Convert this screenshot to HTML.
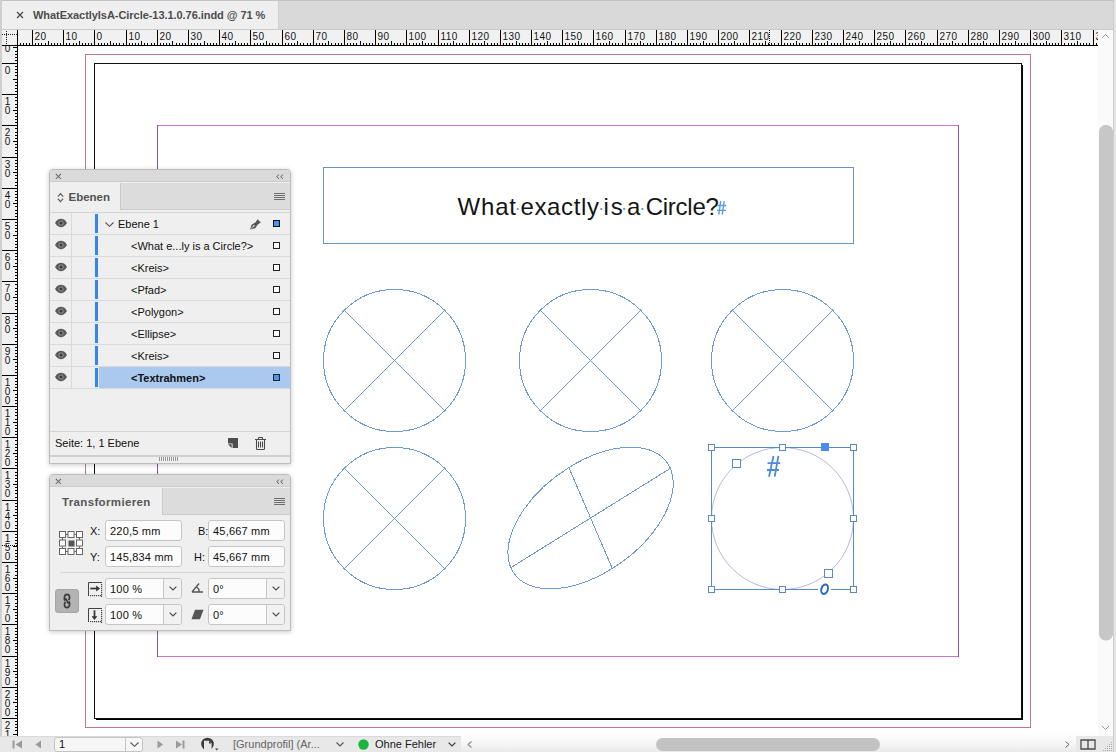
<!DOCTYPE html>
<html><head><meta charset="utf-8"><title>InDesign</title>
<style>
*{margin:0;padding:0;box-sizing:border-box}
html,body{width:1116px;height:752px;overflow:hidden;background:#fff;font-family:"Liberation Sans",sans-serif;color:#111}
.a{position:absolute}
</style></head><body>
<svg class="a" style="left:0;top:0" width="1116" height="752" viewBox="0 0 1116 752"><rect x="85.5" y="54.5" width="945" height="673" fill="none" stroke="#bd7a82" stroke-width="1"/><rect x="94.5" y="63.5" width="927" height="655" fill="#fff" stroke="#111" stroke-width="1"/><path d="M1022.5 65V720M96 719.5H1023" stroke="#000" stroke-width="1" fill="none"/><path d="M157 125.5H959M157 656.5H959" stroke="#c878c8" stroke-width="1" fill="none"/><path d="M157.5 125V657M958.5 125V657" stroke="#7d56ad" stroke-width="1" fill="none"/><rect x="323.5" y="167.5" width="530" height="76" fill="none" stroke="#6a93c2" stroke-width="1"/><circle cx="394.5" cy="360.5" r="71.0" fill="none" stroke="#6e9ad0" stroke-width="1" shape-rendering="crispEdges"/><path d="M344.3 310.3L444.7 410.7M444.7 310.3L344.3 410.7" stroke="#6e9ad0" stroke-width="1" fill="none" shape-rendering="crispEdges"/><circle cx="590.5" cy="360.5" r="71.0" fill="none" stroke="#6e9ad0" stroke-width="1" shape-rendering="crispEdges"/><path d="M540.3 310.3L640.7 410.7M640.7 310.3L540.3 410.7" stroke="#6e9ad0" stroke-width="1" fill="none" shape-rendering="crispEdges"/><circle cx="782.5" cy="360.5" r="71.0" fill="none" stroke="#6e9ad0" stroke-width="1" shape-rendering="crispEdges"/><path d="M732.3 310.3L832.7 410.7M832.7 310.3L732.3 410.7" stroke="#6e9ad0" stroke-width="1" fill="none" shape-rendering="crispEdges"/><circle cx="394.5" cy="518.5" r="71.0" fill="none" stroke="#6e9ad0" stroke-width="1" shape-rendering="crispEdges"/><path d="M344.3 468.3L444.7 568.7M444.7 468.3L344.3 568.7" stroke="#6e9ad0" stroke-width="1" fill="none" shape-rendering="crispEdges"/><circle cx="0" cy="0" r="1" fill="none" stroke="#6e9ad0" stroke-width="1" vector-effect="non-scaling-stroke" shape-rendering="crispEdges" transform="matrix(79.80 -49.70 21.70 50.45 590.60 518.00)"/><path d="M510.8 567.7L670.4 468.3M568.9 467.6L612.3 568.5" stroke="#6e9ad0" stroke-width="1" fill="none" shape-rendering="crispEdges"/><circle cx="782.5" cy="518.5" r="71" fill="none" stroke="#a2a8d2" stroke-width="0.8"/><rect x="711.5" y="447.5" width="142" height="142" fill="none" stroke="#5a88c8" stroke-width="1"/><rect x="708.5" y="444.5" width="6" height="6" fill="#fff" stroke="#5a88c8" stroke-width="1"/><rect x="708.5" y="515.5" width="6" height="6" fill="#fff" stroke="#5a88c8" stroke-width="1"/><rect x="708.5" y="586.5" width="6" height="6" fill="#fff" stroke="#5a88c8" stroke-width="1"/><rect x="779.5" y="444.5" width="6" height="6" fill="#fff" stroke="#5a88c8" stroke-width="1"/><rect x="779.5" y="586.5" width="6" height="6" fill="#fff" stroke="#5a88c8" stroke-width="1"/><rect x="850.5" y="444.5" width="6" height="6" fill="#fff" stroke="#5a88c8" stroke-width="1"/><rect x="850.5" y="515.5" width="6" height="6" fill="#fff" stroke="#5a88c8" stroke-width="1"/><rect x="850.5" y="586.5" width="6" height="6" fill="#fff" stroke="#5a88c8" stroke-width="1"/><rect x="732.5" y="459.5" width="8" height="8" fill="#fff" stroke="#5a88c8" stroke-width="1"/><rect x="824.5" y="569.5" width="8" height="8" fill="#fff" stroke="#5a88c8" stroke-width="1"/><rect x="821" y="443" width="8" height="8" fill="#4b8cf0"/><g font-family='"Liberation Sans", sans-serif' font-size="24" fill="#151515"><text x="457.5" y="214.5" style="letter-spacing:0.83px">What</text><text x="520.5" y="214.5" style="letter-spacing:0.63px">exactly</text><text x="603.6" y="214.5" style="letter-spacing:1.80px">is</text><text x="627.0" y="214.5" style="letter-spacing:0.00px">a</text><text x="645.7" y="214.5" style="letter-spacing:-0.25px">Circle?</text></g><rect x="516.8" y="208" width="2" height="2" fill="#6d9be0"/><rect x="600.3" y="208" width="2" height="2" fill="#6d9be0"/><rect x="623.2" y="208" width="2" height="2" fill="#6d9be0"/><rect x="641.4" y="208" width="2" height="2" fill="#6d9be0"/><path d="M720.7 201.1L718.8 214.7M724.3 201.1L722.2 214.7M717.5 205.5H726M717 210.4H726" stroke="#5b9ae8" stroke-width="1.4" fill="none"/><path d="M773.5 456L769 476.7M778.4 456L774.7 476.7M767.5 463.2H780.2M767 470H779" stroke="#4b8ae0" stroke-width="1.8" fill="none"/><rect x="818" y="584" width="13" height="11" fill="#fff"/><ellipse cx="824.6" cy="589.2" rx="3.2" ry="4.9" transform="rotate(18 824.6 589.2)" fill="none" stroke="#2a66c8" stroke-width="2"/><rect x="0" y="0" width="1116" height="30" fill="#d9d9d9"/><rect x="2" y="0" width="276" height="30" fill="#efefef"/><rect x="0" y="0" width="1116" height="1" fill="#c2c2c2"/><rect x="0" y="29" width="1116" height="1" fill="#c9c9c9"/><rect x="278" y="0" width="1" height="30" fill="#cfcfcf"/><rect x="2" y="30" width="1096" height="15" fill="#f1f1f1"/><rect x="2" y="45" width="15" height="691" fill="#f1f1f1"/><rect x="2" y="45" width="1096" height="1" fill="#000"/><rect x="17" y="30" width="1" height="706" fill="#000"/><path d="M20.5 43V45M23.5 43V45M26.5 43V45M29.5 43V45M32.5 30V45M35.5 43V45M38.5 43V45M41.5 43V45M45.5 43V45M48.5 41V45M51.5 43V45M54.5 43V45M57.5 43V45M60.5 43V45M63.5 30V45M66.5 43V45M69.5 43V45M73.5 43V45M76.5 43V45M79.5 41V45M82.5 43V45M85.5 43V45M88.5 43V45M91.5 43V45M94.5 30V45M98.5 43V45M101.5 43V45M104.5 43V45M107.5 43V45M110.5 41V45M113.5 43V45M116.5 43V45M119.5 43V45M123.5 43V45M126.5 30V45M129.5 43V45M132.5 43V45M135.5 43V45M138.5 43V45M141.5 41V45M144.5 43V45M147.5 43V45M151.5 43V45M154.5 43V45M157.5 30V45M160.5 43V45M163.5 43V45M166.5 43V45M169.5 43V45M172.5 41V45M176.5 43V45M179.5 43V45M182.5 43V45M185.5 43V45M188.5 30V45M191.5 43V45M194.5 43V45M197.5 43V45M200.5 43V45M204.5 41V45M207.5 43V45M210.5 43V45M213.5 43V45M216.5 43V45M219.5 30V45M222.5 43V45M225.5 43V45M229.5 43V45M232.5 43V45M235.5 41V45M238.5 43V45M241.5 43V45M244.5 43V45M247.5 43V45M250.5 30V45M254.5 43V45M257.5 43V45M260.5 43V45M263.5 43V45M266.5 41V45M269.5 43V45M272.5 43V45M275.5 43V45M278.5 43V45M282.5 30V45M285.5 43V45M288.5 43V45M291.5 43V45M294.5 43V45M297.5 41V45M300.5 43V45M303.5 43V45M307.5 43V45M310.5 43V45M313.5 30V45M316.5 43V45M319.5 43V45M322.5 43V45M325.5 43V45M328.5 41V45M331.5 43V45M335.5 43V45M338.5 43V45M341.5 43V45M344.5 30V45M347.5 43V45M350.5 43V45M353.5 43V45M356.5 43V45M360.5 41V45M363.5 43V45M366.5 43V45M369.5 43V45M372.5 43V45M375.5 30V45M378.5 43V45M381.5 43V45M385.5 43V45M388.5 43V45M391.5 41V45M394.5 43V45M397.5 43V45M400.5 43V45M403.5 43V45M406.5 30V45M409.5 43V45M413.5 43V45M416.5 43V45M419.5 43V45M422.5 41V45M425.5 43V45M428.5 43V45M431.5 43V45M434.5 43V45M438.5 30V45M441.5 43V45M444.5 43V45M447.5 43V45M450.5 43V45M453.5 41V45M456.5 43V45M459.5 43V45M462.5 43V45M466.5 43V45M469.5 30V45M472.5 43V45M475.5 43V45M478.5 43V45M481.5 43V45M484.5 41V45M487.5 43V45M491.5 43V45M494.5 43V45M497.5 43V45M500.5 30V45M503.5 43V45M506.5 43V45M509.5 43V45M512.5 43V45M516.5 41V45M519.5 43V45M522.5 43V45M525.5 43V45M528.5 43V45M531.5 30V45M534.5 43V45M537.5 43V45M540.5 43V45M544.5 43V45M547.5 41V45M550.5 43V45M553.5 43V45M556.5 43V45M559.5 43V45M562.5 30V45M565.5 43V45M569.5 43V45M572.5 43V45M575.5 43V45M578.5 41V45M581.5 43V45M584.5 43V45M587.5 43V45M590.5 43V45M593.5 30V45M597.5 43V45M600.5 43V45M603.5 43V45M606.5 43V45M609.5 41V45M612.5 43V45M615.5 43V45M618.5 43V45M622.5 43V45M625.5 30V45M628.5 43V45M631.5 43V45M634.5 43V45M637.5 43V45M640.5 41V45M643.5 43V45M647.5 43V45M650.5 43V45M653.5 43V45M656.5 30V45M659.5 43V45M662.5 43V45M665.5 43V45M668.5 43V45M671.5 41V45M675.5 43V45M678.5 43V45M681.5 43V45M684.5 43V45M687.5 30V45M690.5 43V45M693.5 43V45M696.5 43V45M700.5 43V45M703.5 41V45M706.5 43V45M709.5 43V45M712.5 43V45M715.5 43V45M718.5 30V45M721.5 43V45M724.5 43V45M728.5 43V45M731.5 43V45M734.5 41V45M737.5 43V45M740.5 43V45M743.5 43V45M746.5 43V45M749.5 30V45M753.5 43V45M756.5 43V45M759.5 43V45M762.5 43V45M765.5 41V45M768.5 43V45M771.5 43V45M774.5 43V45M778.5 43V45M781.5 30V45M784.5 43V45M787.5 43V45M790.5 43V45M793.5 43V45M796.5 41V45M799.5 43V45M802.5 43V45M806.5 43V45M809.5 43V45M812.5 30V45M815.5 43V45M818.5 43V45M821.5 43V45M824.5 43V45M827.5 41V45M831.5 43V45M834.5 43V45M837.5 43V45M840.5 43V45M843.5 30V45M846.5 43V45M849.5 43V45M852.5 43V45M855.5 43V45M859.5 41V45M862.5 43V45M865.5 43V45M868.5 43V45M871.5 43V45M874.5 30V45M877.5 43V45M880.5 43V45M884.5 43V45M887.5 43V45M890.5 41V45M893.5 43V45M896.5 43V45M899.5 43V45M902.5 43V45M905.5 30V45M909.5 43V45M912.5 43V45M915.5 43V45M918.5 43V45M921.5 41V45M924.5 43V45M927.5 43V45M930.5 43V45M933.5 43V45M937.5 30V45M940.5 43V45M943.5 43V45M946.5 43V45M949.5 43V45M952.5 41V45M955.5 43V45M958.5 43V45M962.5 43V45M965.5 43V45M968.5 30V45M971.5 43V45M974.5 43V45M977.5 43V45M980.5 43V45M983.5 41V45M986.5 43V45M990.5 43V45M993.5 43V45M996.5 43V45M999.5 30V45M1002.5 43V45M1005.5 43V45M1008.5 43V45M1011.5 43V45M1015.5 41V45M1018.5 43V45M1021.5 43V45M1024.5 43V45M1027.5 43V45M1030.5 30V45M1033.5 43V45M1036.5 43V45M1040.5 43V45M1043.5 43V45M1046.5 41V45M1049.5 43V45M1052.5 43V45M1055.5 43V45M1058.5 43V45M1061.5 30V45M1064.5 43V45M1068.5 43V45M1071.5 43V45M1074.5 43V45M1077.5 41V45M1080.5 43V45M1083.5 43V45M1086.5 43V45M1089.5 43V45M1093.5 30V45M1096.5 43V45" stroke="#000" stroke-width="1" fill="none"/><g font-family='&quot;Liberation Sans&quot;, sans-serif' font-size="10" fill="#151515" style="letter-spacing:0.45px"><text x="34.6" y="39.8">20</text><text x="65.6" y="39.8">10</text><text x="96.6" y="39.8">0</text><text x="128.6" y="39.8">10</text><text x="159.6" y="39.8">20</text><text x="190.6" y="39.8">30</text><text x="221.6" y="39.8">40</text><text x="252.6" y="39.8">50</text><text x="284.6" y="39.8">60</text><text x="315.6" y="39.8">70</text><text x="346.6" y="39.8">80</text><text x="377.6" y="39.8">90</text><text x="408.6" y="39.8">100</text><text x="440.6" y="39.8">110</text><text x="471.6" y="39.8">120</text><text x="502.6" y="39.8">130</text><text x="533.6" y="39.8">140</text><text x="564.6" y="39.8">150</text><text x="595.6" y="39.8">160</text><text x="627.6" y="39.8">170</text><text x="658.6" y="39.8">180</text><text x="689.6" y="39.8">190</text><text x="720.6" y="39.8">200</text><text x="751.6" y="39.8">210</text><text x="783.6" y="39.8">220</text><text x="814.6" y="39.8">230</text><text x="845.6" y="39.8">240</text><text x="876.6" y="39.8">250</text><text x="907.6" y="39.8">260</text><text x="939.6" y="39.8">270</text><text x="970.6" y="39.8">280</text><text x="1001.6" y="39.8">290</text><text x="1032.6" y="39.8">300</text><text x="1063.6" y="39.8">310</text><text x="1095.6" y="39.8">320</text></g><path d="M13 47.5H17M15 51.5H17M15 54.5H17M15 57.5H17M15 60.5H17M2 63.5H17M15 66.5H17M15 69.5H17M15 72.5H17M15 75.5H17M13 79.5H17M15 82.5H17M15 85.5H17M15 88.5H17M15 91.5H17M2 94.5H17M15 97.5H17M15 100.5H17M15 104.5H17M15 107.5H17M13 110.5H17M15 113.5H17M15 116.5H17M15 119.5H17M15 122.5H17M2 125.5H17M15 128.5H17M15 132.5H17M15 135.5H17M15 138.5H17M13 141.5H17M15 144.5H17M15 147.5H17M15 150.5H17M15 153.5H17M2 157.5H17M15 160.5H17M15 163.5H17M15 166.5H17M15 169.5H17M13 172.5H17M15 175.5H17M15 178.5H17M15 182.5H17M15 185.5H17M2 188.5H17M15 191.5H17M15 194.5H17M15 197.5H17M15 200.5H17M13 203.5H17M15 206.5H17M15 210.5H17M15 213.5H17M15 216.5H17M2 219.5H17M15 222.5H17M15 225.5H17M15 228.5H17M15 231.5H17M13 235.5H17M15 238.5H17M15 241.5H17M15 244.5H17M15 247.5H17M2 250.5H17M15 253.5H17M15 256.5H17M15 259.5H17M15 263.5H17M13 266.5H17M15 269.5H17M15 272.5H17M15 275.5H17M15 278.5H17M2 281.5H17M15 284.5H17M15 288.5H17M15 291.5H17M15 294.5H17M13 297.5H17M15 300.5H17M15 303.5H17M15 306.5H17M15 309.5H17M2 313.5H17M15 316.5H17M15 319.5H17M15 322.5H17M15 325.5H17M13 328.5H17M15 331.5H17M15 334.5H17M15 337.5H17M15 341.5H17M2 344.5H17M15 347.5H17M15 350.5H17M15 353.5H17M15 356.5H17M13 359.5H17M15 362.5H17M15 366.5H17M15 369.5H17M15 372.5H17M2 375.5H17M15 378.5H17M15 381.5H17M15 384.5H17M15 387.5H17M13 390.5H17M15 394.5H17M15 397.5H17M15 400.5H17M15 403.5H17M2 406.5H17M15 409.5H17M15 412.5H17M15 415.5H17M15 419.5H17M13 422.5H17M15 425.5H17M15 428.5H17M15 431.5H17M15 434.5H17M2 437.5H17M15 440.5H17M15 444.5H17M15 447.5H17M15 450.5H17M13 453.5H17M15 456.5H17M15 459.5H17M15 462.5H17M15 465.5H17M2 468.5H17M15 472.5H17M15 475.5H17M15 478.5H17M15 481.5H17M13 484.5H17M15 487.5H17M15 490.5H17M15 493.5H17M15 497.5H17M2 500.5H17M15 503.5H17M15 506.5H17M15 509.5H17M15 512.5H17M13 515.5H17M15 518.5H17M15 521.5H17M15 525.5H17M15 528.5H17M2 531.5H17M15 534.5H17M15 537.5H17M15 540.5H17M15 543.5H17M13 546.5H17M15 550.5H17M15 553.5H17M15 556.5H17M15 559.5H17M2 562.5H17M15 565.5H17M15 568.5H17M15 571.5H17M15 575.5H17M13 578.5H17M15 581.5H17M15 584.5H17M15 587.5H17M15 590.5H17M2 593.5H17M15 596.5H17M15 599.5H17M15 603.5H17M15 606.5H17M13 609.5H17M15 612.5H17M15 615.5H17M15 618.5H17M15 621.5H17M2 624.5H17M15 628.5H17M15 631.5H17M15 634.5H17M15 637.5H17M13 640.5H17M15 643.5H17M15 646.5H17M15 649.5H17M15 652.5H17M2 656.5H17M15 659.5H17M15 662.5H17M15 665.5H17M15 668.5H17M13 671.5H17M15 674.5H17M15 677.5H17M15 681.5H17M15 684.5H17M2 687.5H17M15 690.5H17M15 693.5H17M15 696.5H17M15 699.5H17M13 702.5H17M15 706.5H17M15 709.5H17M15 712.5H17M15 715.5H17M2 718.5H17M15 721.5H17M15 724.5H17M15 727.5H17M15 730.5H17M13 734.5H17" stroke="#000" stroke-width="1" fill="none"/><g font-family='&quot;Liberation Sans&quot;, sans-serif' font-size="10" fill="#111" text-anchor="middle"><text x="7.5" y="42.7">1</text><text x="7.5" y="52.1">0</text><text x="7.5" y="73.7">0</text><text x="7.5" y="104.7">1</text><text x="7.5" y="114.0">0</text><text x="7.5" y="135.7">2</text><text x="7.5" y="145.0">0</text><text x="7.5" y="167.7">3</text><text x="7.5" y="177.0">0</text><text x="7.5" y="198.7">4</text><text x="7.5" y="208.0">0</text><text x="7.5" y="229.7">5</text><text x="7.5" y="239.0">0</text><text x="7.5" y="260.7">6</text><text x="7.5" y="270.1">0</text><text x="7.5" y="291.7">7</text><text x="7.5" y="301.1">0</text><text x="7.5" y="323.7">8</text><text x="7.5" y="333.1">0</text><text x="7.5" y="354.7">9</text><text x="7.5" y="364.1">0</text><text x="7.5" y="385.7">1</text><text x="7.5" y="395.1">0</text><text x="7.5" y="404.4">0</text><text x="7.5" y="416.7">1</text><text x="7.5" y="426.1">1</text><text x="7.5" y="435.4">0</text><text x="7.5" y="447.7">1</text><text x="7.5" y="457.1">2</text><text x="7.5" y="466.4">0</text><text x="7.5" y="478.7">1</text><text x="7.5" y="488.1">3</text><text x="7.5" y="497.4">0</text><text x="7.5" y="510.7">1</text><text x="7.5" y="520.0">4</text><text x="7.5" y="529.4">0</text><text x="7.5" y="541.7">1</text><text x="7.5" y="551.1">5</text><text x="7.5" y="560.4">0</text><text x="7.5" y="572.7">1</text><text x="7.5" y="582.1">6</text><text x="7.5" y="591.4">0</text><text x="7.5" y="603.7">1</text><text x="7.5" y="613.1">7</text><text x="7.5" y="622.4">0</text><text x="7.5" y="634.7">1</text><text x="7.5" y="644.1">8</text><text x="7.5" y="653.4">0</text><text x="7.5" y="666.7">1</text><text x="7.5" y="676.1">9</text><text x="7.5" y="685.4">0</text><text x="7.5" y="697.7">2</text><text x="7.5" y="707.1">0</text><text x="7.5" y="716.4">0</text><text x="7.5" y="728.7">2</text><text x="7.5" y="738.1">1</text><text x="7.5" y="747.4">0</text></g><path d="M769.5 30V45" stroke="#111" stroke-width="1" stroke-dasharray="1 1" fill="none"/><path d="M2 545.5H17" stroke="#111" stroke-width="1" stroke-dasharray="1 1" fill="none"/><rect x="2" y="30" width="15" height="15" fill="#f1f1f1"/><path d="M6.5 31V45M2 34.5H17" stroke="#222" stroke-width="1" stroke-dasharray="1 1" fill="none"/><rect x="17" y="30" width="1" height="16" fill="#000"/><rect x="2" y="45" width="16" height="1" fill="#000"/><rect x="0" y="0" width="2" height="752" fill="#cfcfcf"/><rect x="1098" y="30" width="15" height="706" fill="#fafafa"/><rect x="1099" y="125" width="14" height="515.5" rx="6.5" fill="#c7c7c7"/><path d="M1102 38L1105.5 34.5L1109 38" stroke="#9a9a9a" stroke-width="1" fill="none"/><path d="M1102 726L1105.5 729.5L1109 726" stroke="#9a9a9a" stroke-width="1" fill="none"/><defs><linearGradient id="sg" x1="0" y1="0" x2="0" y2="1"><stop offset="0" stop-color="#ffffff" stop-opacity="0"/><stop offset="1" stop-color="#e9e9e9"/></linearGradient></defs><rect x="461" y="728" width="637" height="24" fill="url(#sg)"/><rect x="0" y="736" width="461" height="16" fill="#e8e8e8"/><rect x="0" y="736" width="461" height="1" fill="#dadada"/><rect x="656" y="738" width="224" height="13" rx="6.5" fill="#c2c2c2"/><rect x="1113" y="0" width="1" height="752" fill="#cdcdcd"/><rect x="1114" y="0" width="2" height="752" fill="#e4e4e4"/></svg><svg class="a" style="left:16px;top:11px" width="8" height="8" viewBox="0 0 8 8"><path d="M1 1L7 7M7 1L1 7" stroke="#444" stroke-width="1.2"/></svg><div class="a" style="left:33px;top:8px;font-size:11px;color:#4d4d4d;line-height:14px;font-weight:bold;white-space:nowrap;letter-spacing:-0.05px">WhatExactlyIsA-Circle-13.1.0.76.indd @ 71 %</div><div class="a" style="left:49px;top:169px;width:242px;height:295px;background:#efefef;border:1px solid #bdbdbd;border-radius:4px 4px 0 0;box-shadow:0 1px 5px rgba(0,0,0,0.22)"></div><div class="a" style="left:50px;top:170px;width:240px;height:12px;background:#dadada;border-radius:3px 3px 0 0;border-bottom:1px solid #cbcbcb"></div><svg class="a" style="left:55px;top:173px" width="7" height="7" viewBox="0 0 7 7"><path d="M0.8 0.8L6 6M6 0.8L0.8 6" stroke="#666" stroke-width="1.05"/></svg><svg class="a" style="left:276px;top:174px" width="8" height="6" viewBox="0 0 8 6"><path d="M2.8 0.6L0.9 2.7L2.8 4.8M6.8 0.6L4.9 2.7L6.8 4.8" stroke="#555" stroke-width="1" fill="none"/></svg><div class="a" style="left:120px;top:183px;width:170px;height:27px;background:#dcdcdc;border-left:1px solid #cacaca;border-bottom:1px solid #cacaca"></div><svg class="a" style="left:274px;top:193px" width="11" height="8" viewBox="0 0 11 8"><path d="M0 0.5H11M0 2.5H11M0 4.5H11M0 6.5H11" stroke="#6e6e6e" stroke-width="1"/></svg><svg class="a" style="left:57px;top:192px" width="7" height="11" viewBox="0 0 7 11"><path d="M0.9 4.6L3.5 1.6L6.1 4.6M0.9 6.6L3.5 9.6L6.1 6.6" stroke="#5a5a5a" stroke-width="1.2" fill="none"/></svg><div class="a" style="left:68.5px;top:190px;font-size:11.5px;font-weight:bold;color:#525252;line-height:14px">Ebenen</div><div class="a" style="left:50px;top:212px;width:240px;height:1px;background:#d3d3d3"></div><div class="a" style="left:50px;top:234px;width:240px;height:1px;background:#d9d9d9"></div><div class="a" style="left:71px;top:213px;width:1px;height:22px;background:#d9d9d9"></div><div class="a" style="left:95px;top:214px;width:3px;height:19px;background:#3a84e4;box-shadow:0 0 0 1px #e4eefa"></div><svg class="a" style="left:54px;top:218px" width="14" height="10" viewBox="0 0 14 10"><path d="M1 5C3 1.6 5 0.8 7 0.8S11 1.6 13 5C11 8.4 9 9.2 7 9.2S3 8.4 1 5Z" fill="#5a5a5a"/><circle cx="7" cy="5" r="2.6" fill="#8a8a8a"/><circle cx="7" cy="5" r="1.5" fill="#3c3c3c"/></svg><svg class="a" style="left:105px;top:222px" width="9" height="5" viewBox="0 0 9 5"><path d="M0.5 0.5L4.5 4.3L8.5 0.5" stroke="#555" stroke-width="1.1" fill="none"/></svg><div class="a" style="left:118px;top:217px;font-size:11px;color:#111;line-height:14px">Ebene 1</div><svg class="a" style="left:249px;top:218px" width="12" height="12" viewBox="0 0 12 12"><path d="M1 11.6L2.6 6.8L6.6 4.2L8.6 1.2L11.8 4.4L8.8 6.4L6.2 10.2Z" fill="#555"/><path d="M1.8 10.8L4.6 8" stroke="#ddd" stroke-width="0.9"/><circle cx="4.8" cy="7.8" r="0.9" fill="#ddd"/></svg><div class="a" style="left:273px;top:220px;width:7px;height:7px;background:#4d93f2;border:1px solid #111"></div><div class="a" style="left:50px;top:256px;width:240px;height:1px;background:#d9d9d9"></div><div class="a" style="left:71px;top:235px;width:1px;height:22px;background:#d9d9d9"></div><div class="a" style="left:95px;top:236px;width:3px;height:19px;background:#3a84e4;box-shadow:0 0 0 1px #e4eefa"></div><svg class="a" style="left:54px;top:240px" width="14" height="10" viewBox="0 0 14 10"><path d="M1 5C3 1.6 5 0.8 7 0.8S11 1.6 13 5C11 8.4 9 9.2 7 9.2S3 8.4 1 5Z" fill="#5a5a5a"/><circle cx="7" cy="5" r="2.6" fill="#8a8a8a"/><circle cx="7" cy="5" r="1.5" fill="#3c3c3c"/></svg><div class="a" style="left:131px;top:239px;font-size:11px;color:#111;line-height:14px;font-weight:normal;white-space:nowrap">&lt;What e...ly is a Circle?&gt;</div><div class="a" style="left:273px;top:242px;width:7px;height:7px;background:#fff;border:1px solid #222"></div><div class="a" style="left:50px;top:278px;width:240px;height:1px;background:#d9d9d9"></div><div class="a" style="left:71px;top:257px;width:1px;height:22px;background:#d9d9d9"></div><div class="a" style="left:95px;top:258px;width:3px;height:19px;background:#3a84e4;box-shadow:0 0 0 1px #e4eefa"></div><svg class="a" style="left:54px;top:262px" width="14" height="10" viewBox="0 0 14 10"><path d="M1 5C3 1.6 5 0.8 7 0.8S11 1.6 13 5C11 8.4 9 9.2 7 9.2S3 8.4 1 5Z" fill="#5a5a5a"/><circle cx="7" cy="5" r="2.6" fill="#8a8a8a"/><circle cx="7" cy="5" r="1.5" fill="#3c3c3c"/></svg><div class="a" style="left:131px;top:261px;font-size:11px;color:#111;line-height:14px;font-weight:normal;white-space:nowrap">&lt;Kreis&gt;</div><div class="a" style="left:273px;top:264px;width:7px;height:7px;background:#fff;border:1px solid #222"></div><div class="a" style="left:50px;top:300px;width:240px;height:1px;background:#d9d9d9"></div><div class="a" style="left:71px;top:279px;width:1px;height:22px;background:#d9d9d9"></div><div class="a" style="left:95px;top:280px;width:3px;height:19px;background:#3a84e4;box-shadow:0 0 0 1px #e4eefa"></div><svg class="a" style="left:54px;top:284px" width="14" height="10" viewBox="0 0 14 10"><path d="M1 5C3 1.6 5 0.8 7 0.8S11 1.6 13 5C11 8.4 9 9.2 7 9.2S3 8.4 1 5Z" fill="#5a5a5a"/><circle cx="7" cy="5" r="2.6" fill="#8a8a8a"/><circle cx="7" cy="5" r="1.5" fill="#3c3c3c"/></svg><div class="a" style="left:131px;top:283px;font-size:11px;color:#111;line-height:14px;font-weight:normal;white-space:nowrap">&lt;Pfad&gt;</div><div class="a" style="left:273px;top:286px;width:7px;height:7px;background:#fff;border:1px solid #222"></div><div class="a" style="left:50px;top:322px;width:240px;height:1px;background:#d9d9d9"></div><div class="a" style="left:71px;top:301px;width:1px;height:22px;background:#d9d9d9"></div><div class="a" style="left:95px;top:302px;width:3px;height:19px;background:#3a84e4;box-shadow:0 0 0 1px #e4eefa"></div><svg class="a" style="left:54px;top:306px" width="14" height="10" viewBox="0 0 14 10"><path d="M1 5C3 1.6 5 0.8 7 0.8S11 1.6 13 5C11 8.4 9 9.2 7 9.2S3 8.4 1 5Z" fill="#5a5a5a"/><circle cx="7" cy="5" r="2.6" fill="#8a8a8a"/><circle cx="7" cy="5" r="1.5" fill="#3c3c3c"/></svg><div class="a" style="left:131px;top:305px;font-size:11px;color:#111;line-height:14px;font-weight:normal;white-space:nowrap">&lt;Polygon&gt;</div><div class="a" style="left:273px;top:308px;width:7px;height:7px;background:#fff;border:1px solid #222"></div><div class="a" style="left:50px;top:344px;width:240px;height:1px;background:#d9d9d9"></div><div class="a" style="left:71px;top:323px;width:1px;height:22px;background:#d9d9d9"></div><div class="a" style="left:95px;top:324px;width:3px;height:19px;background:#3a84e4;box-shadow:0 0 0 1px #e4eefa"></div><svg class="a" style="left:54px;top:328px" width="14" height="10" viewBox="0 0 14 10"><path d="M1 5C3 1.6 5 0.8 7 0.8S11 1.6 13 5C11 8.4 9 9.2 7 9.2S3 8.4 1 5Z" fill="#5a5a5a"/><circle cx="7" cy="5" r="2.6" fill="#8a8a8a"/><circle cx="7" cy="5" r="1.5" fill="#3c3c3c"/></svg><div class="a" style="left:131px;top:327px;font-size:11px;color:#111;line-height:14px;font-weight:normal;white-space:nowrap">&lt;Ellipse&gt;</div><div class="a" style="left:273px;top:330px;width:7px;height:7px;background:#fff;border:1px solid #222"></div><div class="a" style="left:50px;top:366px;width:240px;height:1px;background:#d9d9d9"></div><div class="a" style="left:71px;top:345px;width:1px;height:22px;background:#d9d9d9"></div><div class="a" style="left:95px;top:346px;width:3px;height:19px;background:#3a84e4;box-shadow:0 0 0 1px #e4eefa"></div><svg class="a" style="left:54px;top:350px" width="14" height="10" viewBox="0 0 14 10"><path d="M1 5C3 1.6 5 0.8 7 0.8S11 1.6 13 5C11 8.4 9 9.2 7 9.2S3 8.4 1 5Z" fill="#5a5a5a"/><circle cx="7" cy="5" r="2.6" fill="#8a8a8a"/><circle cx="7" cy="5" r="1.5" fill="#3c3c3c"/></svg><div class="a" style="left:131px;top:349px;font-size:11px;color:#111;line-height:14px;font-weight:normal;white-space:nowrap">&lt;Kreis&gt;</div><div class="a" style="left:273px;top:352px;width:7px;height:7px;background:#fff;border:1px solid #222"></div><div class="a" style="left:99px;top:367px;width:191px;height:21px;background:#abc9ef"></div><div class="a" style="left:50px;top:388px;width:240px;height:1px;background:#d9d9d9"></div><div class="a" style="left:71px;top:367px;width:1px;height:22px;background:#d9d9d9"></div><div class="a" style="left:95px;top:368px;width:3px;height:19px;background:#3a84e4;box-shadow:0 0 0 1px #e4eefa"></div><svg class="a" style="left:54px;top:372px" width="14" height="10" viewBox="0 0 14 10"><path d="M1 5C3 1.6 5 0.8 7 0.8S11 1.6 13 5C11 8.4 9 9.2 7 9.2S3 8.4 1 5Z" fill="#5a5a5a"/><circle cx="7" cy="5" r="2.6" fill="#8a8a8a"/><circle cx="7" cy="5" r="1.5" fill="#3c3c3c"/></svg><div class="a" style="left:131px;top:371px;font-size:11px;color:#111;line-height:14px;font-weight:bold;white-space:nowrap">&lt;Textrahmen&gt;</div><div class="a" style="left:273px;top:374px;width:7px;height:7px;background:#4d93f2;border:1px solid #222"></div><div class="a" style="left:50px;top:431px;width:240px;height:1px;background:#d3d3d3"></div><div class="a" style="left:55px;top:436px;font-size:11px;color:#111;line-height:14px">Seite: 1, 1 Ebene</div><svg class="a" style="left:228px;top:438px" width="10" height="10" viewBox="0 0 10 10"><path d="M0 0H10V10H4.6V5.4H0Z" fill="#4e4e4e"/><path d="M0 6.3H3.7V10Z" fill="#4e4e4e"/></svg><svg class="a" style="left:255px;top:437px" width="12" height="13" viewBox="0 0 12 13"><path d="M3.5 2V1.2Q3.5 0.5 4.2 0.5H6.8Q7.5 0.5 7.5 1.2V2M0 2.5H11M1.5 3V11.8Q1.5 12.5 2.2 12.5H8.8Q9.5 12.5 9.5 11.8V3M3.5 4.5V10.5M5.5 4.5V10.5M7.5 4.5V10.5" stroke="#4a4a4a" stroke-width="1.05" fill="none"/></svg><div class="a" style="left:50px;top:455px;width:240px;height:2px;background:#cfcfcf"></div><svg class="a" style="left:159px;top:457px" width="21" height="4" viewBox="0 0 21 4"><path d="M0.5 0V4M2.5 0V4M4.5 0V4M6.5 0V4M8.5 0V4M10.5 0V4M12.5 0V4M14.5 0V4M16.5 0V4M18.5 0V4" stroke="#9a9a9a" stroke-width="1"/></svg><div class="a" style="left:49px;top:474px;width:242px;height:157px;background:#efefef;border:1px solid #bdbdbd;border-radius:4px 4px 0 0;box-shadow:0 1px 5px rgba(0,0,0,0.22)"></div><div class="a" style="left:50px;top:475px;width:240px;height:12px;background:#dadada;border-radius:3px 3px 0 0;border-bottom:1px solid #cbcbcb"></div><svg class="a" style="left:55px;top:478px" width="7" height="7" viewBox="0 0 7 7"><path d="M0.8 0.8L6 6M6 0.8L0.8 6" stroke="#666" stroke-width="1.05"/></svg><svg class="a" style="left:276px;top:479px" width="8" height="6" viewBox="0 0 8 6"><path d="M2.8 0.6L0.9 2.7L2.8 4.8M6.8 0.6L4.9 2.7L6.8 4.8" stroke="#555" stroke-width="1" fill="none"/></svg><div class="a" style="left:162px;top:488px;width:128px;height:27px;background:#dcdcdc;border-left:1px solid #cacaca;border-bottom:1px solid #cacaca"></div><svg class="a" style="left:274px;top:498px" width="11" height="8" viewBox="0 0 11 8"><path d="M0 0.5H11M0 2.5H11M0 4.5H11M0 6.5H11" stroke="#6e6e6e" stroke-width="1"/></svg><div class="a" style="left:62px;top:495px;font-size:11.5px;font-weight:bold;color:#565656;line-height:14px;letter-spacing:0.35px">Transformieren</div><svg class="a" style="left:59px;top:531px" width="26" height="26" viewBox="0 0 26 26"><rect x="0.5" y="0.5" width="6" height="6" fill="#fff" stroke="#666" stroke-width="1"/><rect x="9.0" y="0.5" width="6" height="6" fill="#fff" stroke="#666" stroke-width="1"/><rect x="17.5" y="0.5" width="6" height="6" fill="#fff" stroke="#666" stroke-width="1"/><rect x="0.5" y="9.0" width="6" height="6" fill="#fff" stroke="#666" stroke-width="1"/><rect x="9.5" y="9.5" width="6" height="6" fill="#555"/><rect x="17.5" y="9.0" width="6" height="6" fill="#fff" stroke="#666" stroke-width="1"/><rect x="0.5" y="17.5" width="6" height="6" fill="#fff" stroke="#666" stroke-width="1"/><rect x="9.0" y="17.5" width="6" height="6" fill="#fff" stroke="#666" stroke-width="1"/><rect x="17.5" y="17.5" width="6" height="6" fill="#fff" stroke="#666" stroke-width="1"/><path d="M7 3.5H9M15.5 3.5H17.5M7 20.5H9M15.5 20.5H17.5M3.5 7V9M3.5 15.5V17.5M20.5 7V9M20.5 15.5V17.5" stroke="#666" stroke-width="1"/></svg><div class="a" style="left:90px;top:524px;font-size:11px;color:#111;line-height:14px">X:</div><div class="a" style="left:90px;top:550px;font-size:11px;color:#111;line-height:14px">Y:</div><div class="a" style="left:198px;top:524px;font-size:11px;color:#111;line-height:14px">B:</div><div class="a" style="left:194px;top:550px;font-size:11px;color:#111;line-height:14px">H:</div><div class="a" style="left:105px;top:520px;width:77px;height:21px;background:#fcfcfc;border:1px solid #c6c6c6;border-radius:3px"></div><div class="a" style="left:110px;top:524px;font-size:11px;color:#111;line-height:14px;white-space:nowrap;letter-spacing:0.2px">220,5 mm</div><div class="a" style="left:105px;top:546px;width:77px;height:21px;background:#fcfcfc;border:1px solid #c6c6c6;border-radius:3px"></div><div class="a" style="left:110px;top:550px;font-size:11px;color:#111;line-height:14px;white-space:nowrap;letter-spacing:0.2px">145,834 mm</div><div class="a" style="left:208px;top:520px;width:77px;height:21px;background:#fcfcfc;border:1px solid #c6c6c6;border-radius:3px"></div><div class="a" style="left:213px;top:524px;font-size:11px;color:#111;line-height:14px;white-space:nowrap;letter-spacing:0.2px">45,667 mm</div><div class="a" style="left:208px;top:546px;width:77px;height:21px;background:#fcfcfc;border:1px solid #c6c6c6;border-radius:3px"></div><div class="a" style="left:213px;top:550px;font-size:11px;color:#111;line-height:14px;white-space:nowrap;letter-spacing:0.2px">45,667 mm</div><div class="a" style="left:60px;top:572px;width:225px;height:1px;background:#d6d6d6"></div><div class="a" style="left:55px;top:589px;width:24px;height:24px;background:#b3b3b3;border:1px solid #a6a6a6;border-radius:3px"></div><svg class="a" style="left:62px;top:592px" width="10" height="18" viewBox="0 0 10 18"><path d="M3.2 8.5C1.8 7.5 2 2.3 5 2.3S8.2 6.5 6.5 8.2M6.8 9.5C8.2 10.5 8 15.7 5 15.7S1.8 11.5 3.5 9.8M3.5 6.5L6.5 11.5" stroke="#3a3a3a" stroke-width="1.7" fill="none"/></svg><svg class="a" style="left:88px;top:582px" width="15" height="15" viewBox="0 0 15 15"><path d="M0.5 14V0.5H14" stroke="#444" stroke-width="1" fill="none"/><rect x="13" y="2" width="1.2" height="1.2" fill="#444"/><rect x="13" y="4" width="1.2" height="1.2" fill="#444"/><rect x="13" y="6" width="1.2" height="1.2" fill="#444"/><rect x="13" y="8" width="1.2" height="1.2" fill="#444"/><rect x="13" y="10" width="1.2" height="1.2" fill="#444"/><rect x="13" y="12" width="1.2" height="1.2" fill="#444"/><rect x="13" y="14" width="1.2" height="1.2" fill="#444"/><rect x="2" y="13" width="1.2" height="1.2" fill="#444"/><rect x="4" y="13" width="1.2" height="1.2" fill="#444"/><rect x="6" y="13" width="1.2" height="1.2" fill="#444"/><rect x="8" y="13" width="1.2" height="1.2" fill="#444"/><rect x="10" y="13" width="1.2" height="1.2" fill="#444"/><rect x="12" y="13" width="1.2" height="1.2" fill="#444"/><path d="M2.3 6.5H9" stroke="#333" stroke-width="1.7"/><path d="M8.2 3.6L12 6.5L8.2 9.4Z" fill="#333"/></svg><svg class="a" style="left:88px;top:608px" width="15" height="15" viewBox="0 0 15 15"><path d="M0.5 14V0.5H14" stroke="#444" stroke-width="1" fill="none"/><rect x="13" y="2" width="1.2" height="1.2" fill="#444"/><rect x="13" y="4" width="1.2" height="1.2" fill="#444"/><rect x="13" y="6" width="1.2" height="1.2" fill="#444"/><rect x="13" y="8" width="1.2" height="1.2" fill="#444"/><rect x="13" y="10" width="1.2" height="1.2" fill="#444"/><rect x="13" y="12" width="1.2" height="1.2" fill="#444"/><rect x="13" y="14" width="1.2" height="1.2" fill="#444"/><rect x="2" y="13" width="1.2" height="1.2" fill="#444"/><rect x="4" y="13" width="1.2" height="1.2" fill="#444"/><rect x="6" y="13" width="1.2" height="1.2" fill="#444"/><rect x="8" y="13" width="1.2" height="1.2" fill="#444"/><rect x="10" y="13" width="1.2" height="1.2" fill="#444"/><rect x="12" y="13" width="1.2" height="1.2" fill="#444"/><path d="M6.5 2.3V9" stroke="#333" stroke-width="1.7"/><path d="M3.6 8.2L6.5 12L9.4 8.2Z" fill="#333"/></svg><div class="a" style="left:105px;top:578px;width:77px;height:21px;background:#fcfcfc;border:1px solid #c6c6c6;border-radius:3px"></div><div class="a" style="left:110px;top:582px;font-size:11px;color:#111;line-height:14px;white-space:nowrap;letter-spacing:0.2px">100 %</div><div class="a" style="left:163px;top:579px;width:18px;height:19px;background:#f2f2f2;border-left:1px solid #c6c6c6;border-radius:0 3px 3px 0"></div><svg class="a" style="left:169px;top:586px" width="8" height="5" viewBox="0 0 8 5"><path d="M0.6 0.6L4 4L7.4 0.6" stroke="#4a4a4a" stroke-width="1.2" fill="none"/></svg><div class="a" style="left:105px;top:604px;width:77px;height:21px;background:#fcfcfc;border:1px solid #c6c6c6;border-radius:3px"></div><div class="a" style="left:110px;top:608px;font-size:11px;color:#111;line-height:14px;white-space:nowrap;letter-spacing:0.2px">100 %</div><div class="a" style="left:163px;top:605px;width:18px;height:19px;background:#f2f2f2;border-left:1px solid #c6c6c6;border-radius:0 3px 3px 0"></div><svg class="a" style="left:169px;top:612px" width="8" height="5" viewBox="0 0 8 5"><path d="M0.6 0.6L4 4L7.4 0.6" stroke="#4a4a4a" stroke-width="1.2" fill="none"/></svg><svg class="a" style="left:191px;top:582px" width="13" height="11" viewBox="0 0 13 11"><path d="M1 10H12M1 10L8 1.5M5.5 4.8Q8 6.5 8.3 10" stroke="#555" stroke-width="1.3" fill="none"/></svg><svg class="a" style="left:191px;top:609px" width="13" height="11" viewBox="0 0 13 11"><path d="M4 0.8H12.5L9 10.2H0.5Z" fill="#555"/></svg><div class="a" style="left:208px;top:578px;width:77px;height:21px;background:#fcfcfc;border:1px solid #c6c6c6;border-radius:3px"></div><div class="a" style="left:213px;top:582px;font-size:11px;color:#111;line-height:14px;white-space:nowrap;letter-spacing:0.2px">0&#176;</div><div class="a" style="left:266px;top:579px;width:18px;height:19px;background:#f2f2f2;border-left:1px solid #c6c6c6;border-radius:0 3px 3px 0"></div><svg class="a" style="left:272px;top:586px" width="8" height="5" viewBox="0 0 8 5"><path d="M0.6 0.6L4 4L7.4 0.6" stroke="#4a4a4a" stroke-width="1.2" fill="none"/></svg><div class="a" style="left:208px;top:604px;width:77px;height:21px;background:#fcfcfc;border:1px solid #c6c6c6;border-radius:3px"></div><div class="a" style="left:213px;top:608px;font-size:11px;color:#111;line-height:14px;white-space:nowrap;letter-spacing:0.2px">0&#176;</div><div class="a" style="left:266px;top:605px;width:18px;height:19px;background:#f2f2f2;border-left:1px solid #c6c6c6;border-radius:0 3px 3px 0"></div><svg class="a" style="left:272px;top:612px" width="8" height="5" viewBox="0 0 8 5"><path d="M0.6 0.6L4 4L7.4 0.6" stroke="#4a4a4a" stroke-width="1.2" fill="none"/></svg><svg class="a" style="left:12px;top:740px" width="30" height="9" viewBox="0 0 30 9"><path d="M1.5 0.5V8.5" stroke="#9a9a9a" stroke-width="2"/><path d="M10 0.5L3.5 4.5L10 8.5Z" fill="#9a9a9a"/><path d="M29 0.5L23.5 4.5L29 8.5Z" fill="#9a9a9a"/></svg><div class="a" style="left:54px;top:737px;width:89px;height:15px;background:#f6f6f6;border:1px solid #c4c4c4;border-radius:3px"></div><div class="a" style="left:125px;top:738px;width:1px;height:13px;background:#c4c4c4"></div><svg class="a" style="left:130px;top:742px" width="9" height="5" viewBox="0 0 9 5"><path d="M0.5 0.5L4.5 4.3L8.5 0.5" stroke="#555" stroke-width="1.1" fill="none"/></svg><div class="a" style="left:59px;top:738px;font-size:11px;color:#111;line-height:13px">1</div><svg class="a" style="left:157px;top:740px" width="29" height="9" viewBox="0 0 29 9"><path d="M0.5 0.5L6 4.5L0.5 8.5Z" fill="#9a9a9a"/><path d="M19 0.5L25 4.5L19 8.5Z" fill="#9a9a9a"/><path d="M26.5 0.5V8.5" stroke="#9a9a9a" stroke-width="2"/></svg><svg class="a" style="left:200px;top:737px" width="20" height="14" viewBox="0 0 20 14"><circle cx="7.5" cy="7" r="6.3" fill="#3a3a3a"/><path d="M4 14V3.8H9.2L11.6 6.2V14Z" fill="#e6e6e6"/><path d="M9 3.8V6.4H11.6Z" fill="#3a3a3a"/><path d="M15 11.5H18.5L16.75 13.5Z" fill="#444"/></svg><div class="a" style="left:233px;top:738px;font-size:11px;color:#666;line-height:13px;white-space:nowrap">[Grundprofil] (Ar...</div><svg class="a" style="left:336px;top:742px" width="8" height="5" viewBox="0 0 8 5"><path d="M0.5 0.5L4 4L7.5 0.5" stroke="#555" stroke-width="1.1" fill="none"/></svg><svg class="a" style="left:358px;top:739px" width="11" height="11" viewBox="0 0 11 11"><circle cx="5.5" cy="5.5" r="5.2" fill="#19b63e"/></svg><div class="a" style="left:375px;top:738px;font-size:11px;color:#1a1a1a;line-height:13px;white-space:nowrap">Ohne Fehler</div><svg class="a" style="left:448px;top:742px" width="8" height="5" viewBox="0 0 8 5"><path d="M0.6 0.6L4 4L7.4 0.6" stroke="#3a3a3a" stroke-width="1.2" fill="none"/></svg><svg class="a" style="left:467px;top:741px" width="5" height="7" viewBox="0 0 5 7"><path d="M4.5 0.5L1 3.5L4.5 6.5" stroke="#888" stroke-width="1.1" fill="none"/></svg><svg class="a" style="left:1065px;top:741px" width="5" height="7" viewBox="0 0 5 7"><path d="M0.5 0.5L4 3.5L0.5 6.5" stroke="#666" stroke-width="1" fill="none"/></svg><div class="a" style="left:1076px;top:736px;width:37px;height:16px;background:#e8e8e8"></div><svg class="a" style="left:1098px;top:739px" width="15" height="13" viewBox="0 0 15 13"><rect x="13" y="11" width="1" height="1" fill="#aaa"/><rect x="13" y="9" width="1" height="1" fill="#aaa"/><rect x="13" y="7" width="1" height="1" fill="#aaa"/><rect x="13" y="5" width="1" height="1" fill="#aaa"/><rect x="13" y="3" width="1" height="1" fill="#aaa"/><rect x="11" y="11" width="1" height="1" fill="#aaa"/><rect x="11" y="9" width="1" height="1" fill="#aaa"/><rect x="11" y="7" width="1" height="1" fill="#aaa"/><rect x="11" y="5" width="1" height="1" fill="#aaa"/><rect x="9" y="11" width="1" height="1" fill="#aaa"/><rect x="9" y="9" width="1" height="1" fill="#aaa"/><rect x="9" y="7" width="1" height="1" fill="#aaa"/><rect x="7" y="11" width="1" height="1" fill="#aaa"/><rect x="7" y="9" width="1" height="1" fill="#aaa"/><rect x="5" y="11" width="1" height="1" fill="#aaa"/></svg><svg class="a" style="left:1080px;top:739px" width="16" height="11" viewBox="0 0 16 11"><path d="M1 1H15V10H1ZM8 1V10" stroke="#4a4a4a" stroke-width="1.3" fill="none"/></svg></body></html>
